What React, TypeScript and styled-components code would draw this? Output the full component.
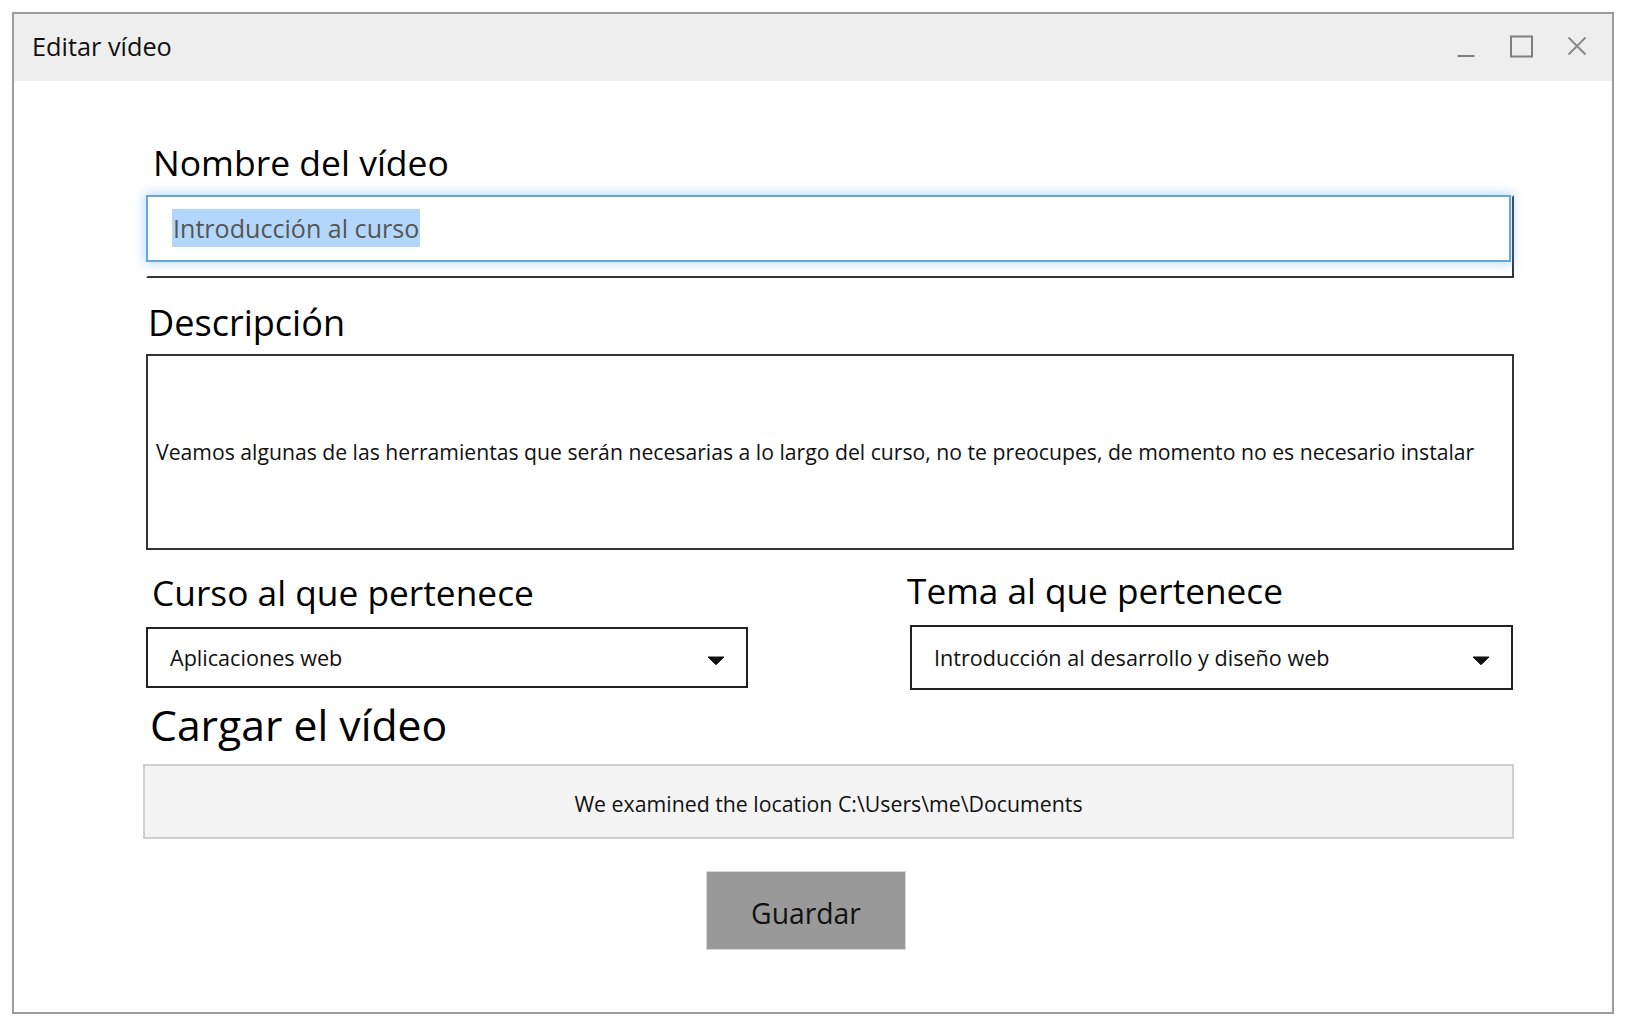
import React from "react";
import styled, { createGlobalStyle } from "styled-components";

const FONT = `"Open Sans", "Noto Sans", sans-serif`;

const Global = createGlobalStyle`
  html, body { margin: 0; padding: 0; background: #ffffff; }
  body { font-family: ${FONT}; color: #111; }
  * { box-sizing: border-box; }
`;

const Window = styled.div`
  margin: 12px 0 0 12px;
  width: 1602px;
  height: 1002px;
  border: 2px solid #9c9c9c;
  display: flex;
  flex-direction: column;
  background: #fff;
`;

const TitleBar = styled.div`
  height: 67px;
  flex: none;
  background: #eeeeee;
  display: flex;
  align-items: center;
  padding: 0 16px 3px 18px;
`;

const Title = styled.div`
  font-family: ${FONT};
  font-size: 25.3px;
  color: #111;
  flex: 1;
`;

const Controls = styled.div`
  display: flex;
  align-items: center;
`;

const CtrlBtn = styled.div<{ $w: number }>`
  width: ${(p) => p.$w}px;
  height: 30px;
  display: flex;
  align-items: center;
  justify-content: center;
`;

const Content = styled.div`
  flex: 1;
  display: flex;
  flex-direction: column;
  padding: 0 98px 0 132px;
`;

const Label = styled.div<{ $size: number; $mt: number; $ml?: number }>`
  font-family: ${FONT};
  font-size: ${(p) => p.$size}px;
  line-height: 1;
  height: ${(p) => p.$size}px;
  margin-top: ${(p) => p.$mt}px;
  margin-left: ${(p) => p.$ml ?? 0}px;
  color: #000;
  white-space: nowrap;
`;

const FieldFrame = styled.div`
  margin-top: 14px;
  height: 83px;
  border: 2px solid #333;
  border-top-color: transparent;
  border-left-color: transparent;
`;

const FocusInput = styled.div`
  margin: -2px 0 0 -2px;
  width: 1365px;
  height: 67px;
  border: 2px solid #64a8e2;
  background: #fff;
  box-shadow: 0 0 10px 2px rgba(120, 180, 235, 0.45);
  display: flex;
  align-items: center;
  padding-left: 24px;
`;

const Selected = styled.span`
  background: #b3d7fb;
  color: #555;
  font-family: ${FONT};
  font-size: 25.1px;
  line-height: 38px;
  height: 38px;
  padding: 0 1px;
`;

const TextArea = styled.div`
  margin-top: 14px;
  height: 196px;
  border: 2px solid #333;
  display: flex;
  align-items: center;
  padding-left: 8px;
  font-family: ${FONT};
  font-size: 21.2px;
  color: #111;
  white-space: nowrap;
  overflow: hidden;
`;

const SelectRow = styled.div`
  display: grid;
  grid-template-columns: 602px 603px;
  column-gap: 162px;
`;

const SelectCol = styled.div<{ $pt: number }>`
  display: flex;
  flex-direction: column;
  padding-top: ${(p) => p.$pt}px;
`;

const Select = styled.div<{ $h: number }>`
  margin-top: 17px;
  height: ${(p) => p.$h}px;
  border: 2px solid #222;
  display: flex;
  align-items: center;
  justify-content: space-between;
  padding: 0 21px 0 22px;
  font-family: ${FONT};
  font-size: 21.6px;
  color: #111;
`;

const Caret = () => (
  <svg width="18" height="9" viewBox="0 0 18 9" style={{ marginTop: 6 }}>
    <path d="M1 1 L17 1 L9.6 8.2 Q9 8.7 8.4 8.2 Z" fill="#111" stroke="#111" strokeWidth="1" strokeLinejoin="round" />
  </svg>
);

const UploadBox = styled.div`
  margin: 18px 0 0 -3px;
  height: 75px;
  border: 2px solid #cfcfcf;
  background: #f4f4f4;
  display: flex;
  align-items: center;
  justify-content: center;
  font-family: ${FONT};
  font-size: 21.3px;
  color: #111;
  padding-top: 4px;
`;

const ButtonRow = styled.div`
  display: flex;
  margin-top: 32px;
  padding-left: 560px;
`;

const SaveButton = styled.button`
  width: 200px;
  height: 79px;
  background: #999999;
  border: 1px solid #d8d8d8;
  font-family: ${FONT};
  font-size: 28.3px;
  color: #111;
  padding: 4px 0 0;
  cursor: pointer;
`;

export default function App() {
  return (
    <>
      <Global />
      <Window>
        <TitleBar>
          <Title>Editar vídeo</Title>
          <Controls>
            <CtrlBtn $w={37}>
              <svg width="18" height="30" viewBox="0 0 18 30">
                <line x1="0.5" y1="25" x2="17.5" y2="25" stroke="#7f7f7f" strokeWidth="2" />
              </svg>
            </CtrlBtn>
            <CtrlBtn $w={74}>
              <svg width="23" height="23" viewBox="0 0 23 23">
                <rect x="1" y="1.5" width="21" height="20" fill="none" stroke="#7f7f7f" strokeWidth="2" />
              </svg>
            </CtrlBtn>
            <CtrlBtn $w={38}>
              <svg width="20" height="20" viewBox="0 0 20 20">
                <path d="M1.5 1.5 L18.5 18.5 M18.5 1.5 L1.5 18.5" stroke="#8a8a8a" strokeWidth="2" />
              </svg>
            </CtrlBtn>
          </Controls>
        </TitleBar>
        <Content>
          <Label $size={35.5} $mt={64} $ml={7}>Nombre del vídeo</Label>
          <FieldFrame>
            <FocusInput>
              <Selected>Introducción al curso</Selected>
            </FocusInput>
          </FieldFrame>
          <Label $size={36.1} $mt={26} $ml={2}>Descripción</Label>
          <TextArea>
            Veamos algunas de las herramientas que serán necesarias a lo largo del curso, no te preocupes, de momento no es necesario instalar
          </TextArea>
          <SelectRow>
            <SelectCol $pt={25}>
              <Label $size={35.3} $mt={0} $ml={6}>Curso al que pertenece</Label>
              <Select $h={61}>
                <span>Aplicaciones web</span>
                <Caret />
              </Select>
            </SelectCol>
            <SelectCol $pt={23}>
              <Label $size={35.2} $mt={0} $ml={-3}>Tema al que pertenece</Label>
              <Select $h={65}>
                <span>Introducción al desarrollo y diseño web</span>
                <Caret />
              </Select>
            </SelectCol>
          </SelectRow>
          <Label $size={42.7} $mt={14} $ml={4}>Cargar el vídeo</Label>
          <UploadBox>We examined the location C:\Users\me\Documents</UploadBox>
          <ButtonRow>
            <SaveButton>Guardar</SaveButton>
          </ButtonRow>
        </Content>
      </Window>
    </>
  );
}
